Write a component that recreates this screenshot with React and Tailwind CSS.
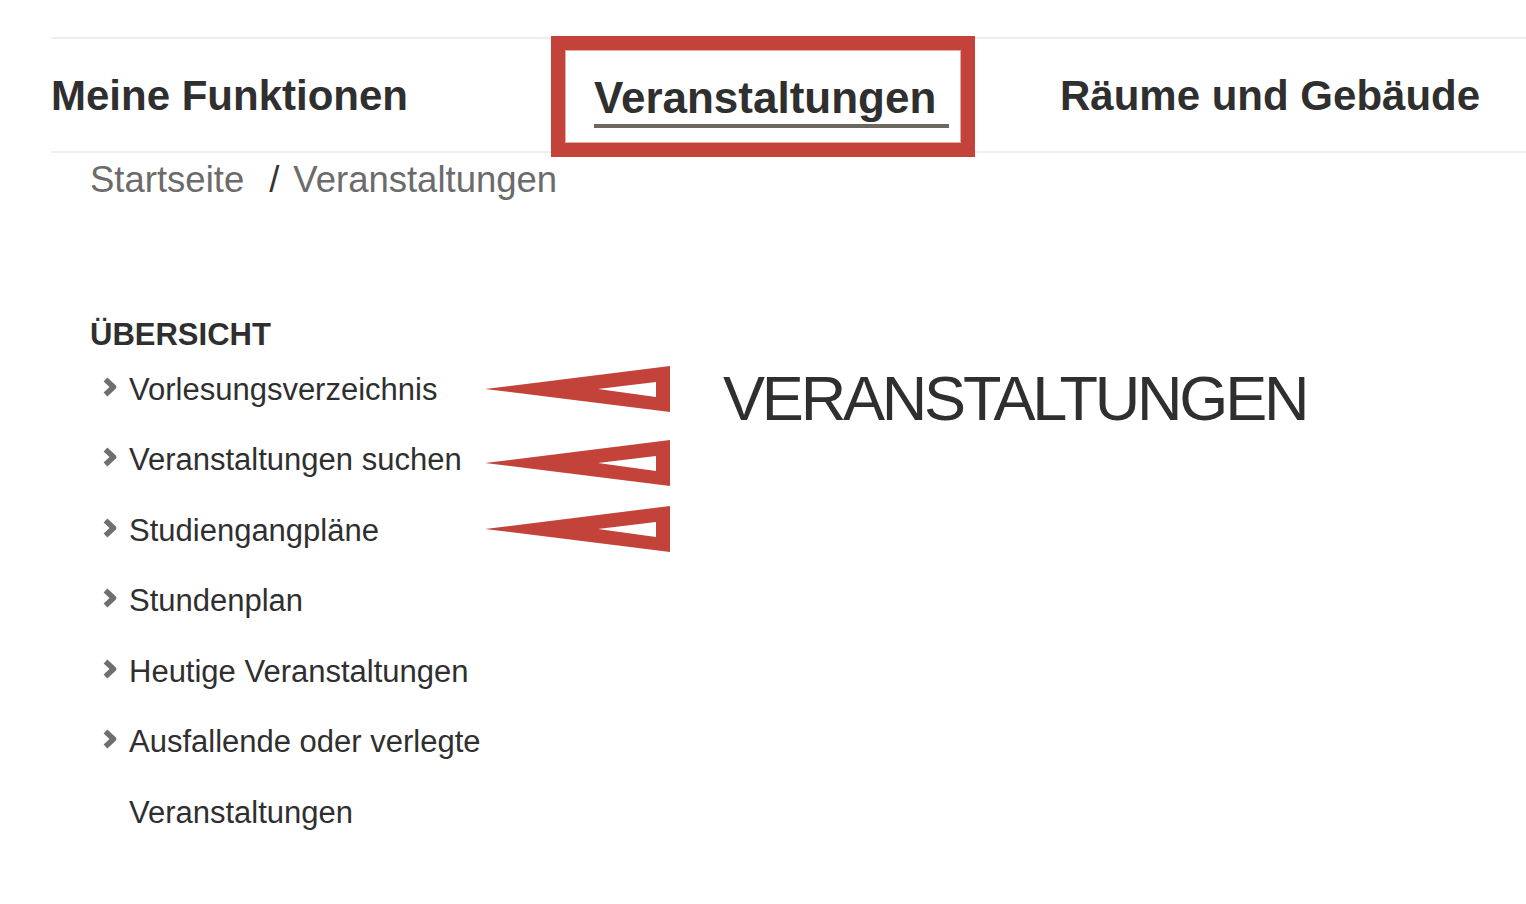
import React from 'react';

const navItems = [
  'Vorlesungsverzeichnis',
  'Veranstaltungen suchen',
  'Studiengangpläne',
  'Stundenplan',
  'Heutige Veranstaltungen',
  'Ausfallende oder verlegte Veranstaltungen',
];

// red annotation arrows, top offsets measured against the list
const arrowTops = [11, 85, 151];

const Chevron = () => (
  <svg width="17" height="23" viewBox="0 0 17 23" className="blur-[0.7px]">
    <polyline
      points="4.5,3.5 12.5,11 4.5,18.5"
      fill="none"
      stroke="#6f6f6f"
      strokeWidth="5.5"
      strokeLinejoin="round"
    />
  </svg>
);

const Arrow = ({ top }) => (
  <svg
    width="185"
    height="46"
    viewBox="0 0 185 46"
    className="absolute left-[395px]"
    style={{ top }}
  >
    <path
      d="M0 23 L185 0 L185 46 Z M113 23 L171 16 L171 31 Z"
      fill="#c3433a"
      fillRule="evenodd"
    />
  </svg>
);

const App = () => {
  return (
    <div className="w-full h-[904px] bg-white text-[#333] font-['Liberation_Sans',Arial,Helvetica,sans-serif] overflow-hidden">
      {/* Top navigation */}
      <div className="relative ml-[51px] mt-[37px] h-[116px] border-y-2 border-[#eeeeee] flex items-start">
        <div className="w-[543px] pt-[36px] text-[42px] leading-none font-bold text-[#2f2f2f]">
          Meine Funktionen
        </div>
        <div className="w-[466px] pt-[37px]">
          <span className="inline-block text-[44px] leading-none font-bold text-[#2f2f2f] pb-1 pr-[13px] border-b-4 border-[#6e6861]">
            Veranstaltungen
          </span>
        </div>
        <div className="pt-[36px] text-[42px] leading-none font-bold text-[#2f2f2f] whitespace-nowrap">
          Räume und Gebäude
        </div>

        {/* annotation box */}
        <div className="absolute left-[500px] top-[-3px] w-[424px] h-[121px] border-[14px] border-[#c3433a]">
          <div className="w-full h-full border border-[#e8aaa5]" />
        </div>
      </div>

      {/* Breadcrumb */}
      <div className="ml-[90px] mt-[9px] flex items-start text-[36.5px] leading-none">
        <span className="text-[#6b6b6b]">Startseite</span>
        <span className="ml-[25px] text-[#333]">/</span>
        <span className="ml-[14px] text-[#6b6b6b]">Veranstaltungen</span>
      </div>

      {/* Content */}
      <div className="ml-[90px] mt-[120px] flex items-start">
        <div className="w-[633px]">
          <h2 className="text-[31px] leading-none font-bold text-[#2f2f2f]">ÜBERSICHT</h2>
          <ul className="relative mt-[5px] flex flex-col">
            {navItems.map((item) => (
              <li key={item} className="flex items-start">
                <div className="w-[39px] pl-[11px] pt-[21px] shrink-0">
                  <Chevron />
                </div>
                <span className="w-[380px] text-[31px] leading-[70.6px] text-[#2f2f2f]">{item}</span>
              </li>
            ))}
            {arrowTops.map((t) => (
              <Arrow key={t} top={t} />
            ))}
          </ul>
        </div>
        <h1 className="mt-[48px] text-[63px] leading-none tracking-[-3.2px] text-[#2f2f2f] whitespace-nowrap">
          VERANSTALTUNGEN
        </h1>
      </div>
    </div>
  );
};

export default App;
